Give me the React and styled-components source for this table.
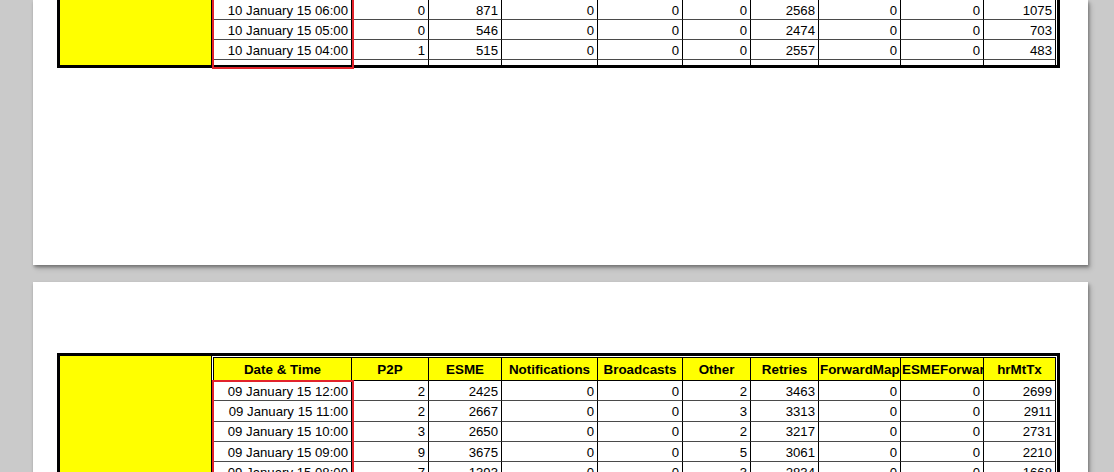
import React from "react";
import styled, { createGlobalStyle } from "styled-components";

const GlobalStyle = createGlobalStyle`
  html, body {
    margin: 0;
    padding: 0;
    background: #cacaca;
    overflow: hidden;
  }
  body {
    font-family: "Liberation Sans", Arial, sans-serif;
  }
`;

const COLUMNS = "138px 77px 73px 96px 85px 68px 68px 82px 83px 72px";

const HEADERS = [
  "Date & Time",
  "P2P",
  "ESME",
  "Notifications",
  "Broadcasts",
  "Other",
  "Retries",
  "ForwardMap",
  "ESMEForward",
  "hrMtTx",
];

const firstPageRows = [
  ["10 January 15 06:00", 0, 871, 0, 0, 0, 2568, 0, 0, 1075],
  ["10 January 15 05:00", 0, 546, 0, 0, 0, 2474, 0, 0, 703],
  ["10 January 15 04:00", 1, 515, 0, 0, 0, 2557, 0, 0, 483],
];

const secondPageRows = [
  ["09 January 15 12:00", 2, 2425, 0, 0, 2, 3463, 0, 0, 2699],
  ["09 January 15 11:00", 2, 2667, 0, 0, 3, 3313, 0, 0, 2911],
  ["09 January 15 10:00", 3, 2650, 0, 0, 2, 3217, 0, 0, 2731],
  ["09 January 15 09:00", 9, 3675, 0, 0, 5, 3061, 0, 0, 2210],
  ["09 January 15 08:00", 7, 1393, 0, 0, 3, 2834, 0, 0, 1668],
];

const Viewer = styled.div`
  height: 472px;
  overflow: hidden;
  display: flex;
  flex-direction: column;
  gap: 17px;
  padding-left: 33px;
`;

const Page = styled.div`
  flex: none;
  width: 1055px;
  height: ${(p) => p.$height}px;
  padding-top: ${(p) => p.$top || 0}px;
  padding-left: 24px;
  box-sizing: border-box;
  background: #ffffff;
  box-shadow: 1px 2px 3px rgba(0, 0, 0, 0.35), 3px 4px 5px rgba(0, 0, 0, 0.15);
`;

const Frame = styled.div`
  display: flex;
  width: fit-content;
  border: 3px solid #000;
  border-top: ${(p) => (p.$cut ? "none" : "3px solid #000")};
  background: #fff;
`;

const Filler = styled.div`
  width: 151px;
  flex: none;
  background: #ffff00;
  border-right: 1px solid #000;
`;

const Sheet = styled.div`
  position: relative;
  padding: ${(p) => (p.$cut ? "0 1px 0 1px" : "1px 1px 0 1px")};
`;

const Grid = styled.div`
  border-left: 1px solid #000;
  border-top: ${(p) => (p.$cut ? "none" : "1px solid #000")};
`;

const Row = styled.div`
  display: grid;
  grid-template-columns: ${COLUMNS};
  height: ${(p) => p.$h}px;
`;

const HeadCell = styled.div`
  box-sizing: border-box;
  background: #ffff00;
  border-right: 1px solid #000;
  border-bottom: 1px solid #000;
  font-weight: bold;
  font-size: 13.4px;
  color: #000;
  text-align: center;
  white-space: nowrap;
  overflow: hidden;
  padding: 1px 1px 0;
  display: flex;
  align-items: center;
  justify-content: ${(p) => (p.$clip ? "flex-start" : "center")};
`;

const Cell = styled.div`
  box-sizing: border-box;
  border-right: 1px solid #000;
  border-bottom: ${(p) => (p.$open ? "none" : "1px solid #4a4a4a")};
  font-size: 13.2px;
  color: #000;
  white-space: nowrap;
  overflow: hidden;
  padding: 1px 3px 0 0;
  display: flex;
  align-items: center;
  justify-content: flex-end;
`;

const Highlight = styled.div`
  position: absolute;
  left: 0;
  width: 142px;
  top: ${(p) => p.$top}px;
  bottom: ${(p) => p.$bottom}px;
  box-sizing: border-box;
  border: 2px solid #e2232b;
  pointer-events: none;
`;

function DataRow({ values, h }) {
  return (
    <Row $h={h}>
      {values.map((v, i) => (
        <Cell key={i}>{v}</Cell>
      ))}
    </Row>
  );
}

function SpillRow({ h }) {
  return (
    <Row $h={h}>
      {HEADERS.map((name) => (
        <Cell key={name} $open />
      ))}
    </Row>
  );
}

function Table({ rows, showHeader, cut, rowHeight, spill, mark }) {
  return (
    <Frame $cut={cut}>
      <Filler />
      <Sheet $cut={cut}>
        <Grid $cut={cut}>
          {showHeader && (
            <Row $h={23}>
              {HEADERS.map((name) => (
                <HeadCell key={name} $clip={name.startsWith("ESMEF") || name.startsWith("Forw")}>
                  {name}
                </HeadCell>
              ))}
            </Row>
          )}
          {rows.map((r) => (
            <DataRow key={r[0]} values={r} h={rowHeight} />
          ))}
          {spill && <SpillRow h={spill} />}
        </Grid>
        <Highlight $top={mark.top} $bottom={mark.bottom} />
      </Sheet>
    </Frame>
  );
}

export default function App() {
  return (
    <>
      <GlobalStyle />
      <Viewer>
        <Page $height={265}>
          <Table
            rows={firstPageRows}
            cut
            rowHeight={20}
            spill={5}
            mark={{ top: -10, bottom: -4 }}
          />
        </Page>
        <Page $height={600} $top={71}>
          <Table
            rows={secondPageRows}
            showHeader
            rowHeight={20.3}
            mark={{ top: 24, bottom: -20 }}
          />
        </Page>
      </Viewer>
    </>
  );
}
